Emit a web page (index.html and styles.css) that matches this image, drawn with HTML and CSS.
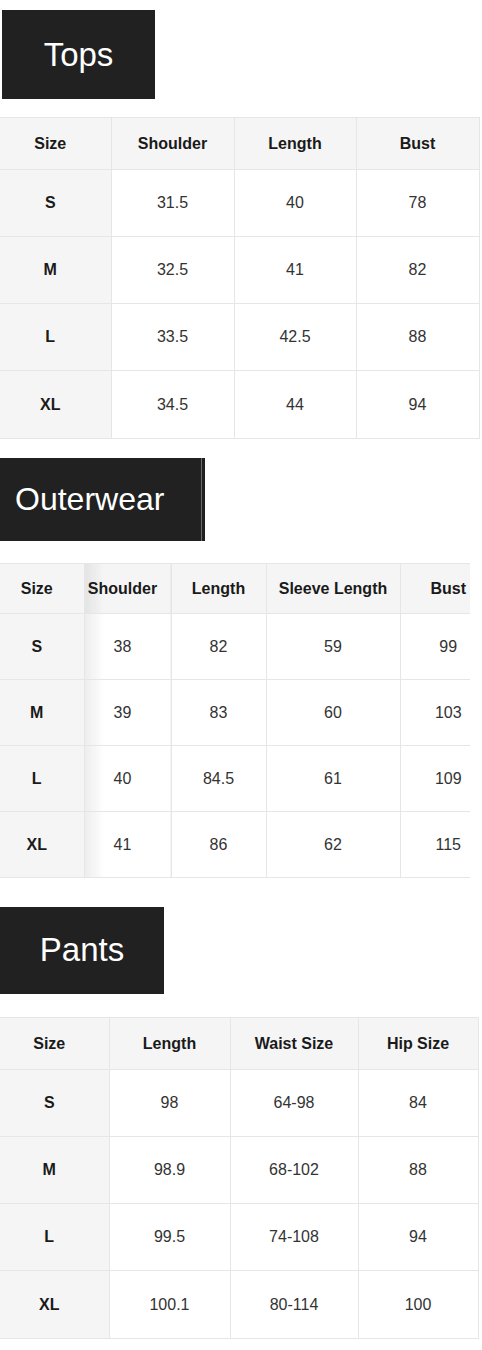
FILE: index.html
```html
<!DOCTYPE html>
<html lang="en">
<head>
<meta charset="utf-8">
<title>Size Chart</title>
<link rel="stylesheet" href="styles.css">
</head>
<body>
<main class="page">
  <section class="chart chart-tops">
    <h2 class="tag tag-tops">Tops</h2>
    <div class="table-wrap">
      <table class="size-table tops">
        <colgroup><col style="width:111px"><col style="width:123px"><col style="width:122px"><col style="width:123px"></colgroup>
        <thead>
          <tr><th>Size</th><th>Shoulder</th><th>Length</th><th>Bust</th></tr>
        </thead>
        <tbody>
          <tr><th>S</th><td>31.5</td><td>40</td><td>78</td></tr>
          <tr><th>M</th><td>32.5</td><td>41</td><td>82</td></tr>
          <tr><th>L</th><td>33.5</td><td>42.5</td><td>88</td></tr>
          <tr><th>XL</th><td>34.5</td><td>44</td><td>94</td></tr>
        </tbody>
      </table>
    </div>
  </section>

  <section class="chart chart-outer">
    <h2 class="tag tag-outer">Outerwear</h2>
    <div class="table-wrap clip">
      <table class="size-table outer">
        <colgroup><col style="width:84px"><col style="width:87px"><col style="width:95px"><col style="width:134px"><col style="width:96px"></colgroup>
        <thead>
          <tr><th>Size</th><th class="shade shift">Shoulder</th><th>Length</th><th>Sleeve Length</th><th class="last">Bust</th></tr>
        </thead>
        <tbody>
          <tr><th>S</th><td class="shade shift">38</td><td>82</td><td>59</td><td class="last">99</td></tr>
          <tr><th>M</th><td class="shade shift">39</td><td>83</td><td>60</td><td class="last">103</td></tr>
          <tr><th>L</th><td class="shade shift">40</td><td>84.5</td><td>61</td><td class="last">109</td></tr>
          <tr><th>XL</th><td class="shade shift">41</td><td>86</td><td>62</td><td class="last">115</td></tr>
        </tbody>
      </table>
    </div>
  </section>

  <section class="chart chart-pants">
    <h2 class="tag tag-pants">Pants</h2>
    <div class="table-wrap">
      <table class="size-table pants">
        <colgroup><col style="width:109px"><col style="width:121px"><col style="width:128px"><col style="width:120px"></colgroup>
        <thead>
          <tr><th>Size</th><th>Length</th><th>Waist Size</th><th>Hip Size</th></tr>
        </thead>
        <tbody>
          <tr><th>S</th><td>98</td><td>64-98</td><td>84</td></tr>
          <tr><th>M</th><td>98.9</td><td>68-102</td><td>88</td></tr>
          <tr><th>L</th><td>99.5</td><td>74-108</td><td>94</td></tr>
          <tr><th>XL</th><td>100.1</td><td>80-114</td><td>100</td></tr>
        </tbody>
      </table>
    </div>
  </section>
</main>
</body>
</html>
```

FILE: styles.css
```css
html, body {
  margin: 0;
  padding: 0;
  background: #ffffff;
}

body {
  font-family: "Liberation Sans", Arial, Helvetica, sans-serif;
  color: #222;
  width: 482px;
}

.page {
  display: flex;
  flex-direction: column;
  align-items: flex-start;
}

.chart {
  display: flex;
  flex-direction: column;
  align-items: flex-start;
}

.tag {
  margin: 0;
  background: #212121;
  color: #fff;
  font-weight: 400;
  font-size: 33px;
  line-height: 1;
  display: flex;
  align-items: center;
  justify-content: center;
  box-sizing: border-box;
}

.tag-tops {
  margin-top: 10px;
  margin-left: 2px;
  width: 153px;
  height: 89px;
}

.tag-outer {
  margin-top: 19px;
  width: 205px;
  height: 83px;
  font-size: 32px;
  justify-content: flex-start;
  padding-left: 15px;
  padding-bottom: 2px;
  box-shadow: inset -3px 0 0 #1f1f1f, inset -4px 0 0 #6a6a6a;
}

.tag-pants {
  margin-top: 29px;
  width: 164px;
  height: 87px;
  padding-bottom: 2px;
}

.table-wrap {
  margin-top: 18px;
}

.chart-outer .table-wrap {
  margin-top: 22px;
}

.chart-pants .table-wrap {
  margin-top: 23px;
}

.table-wrap.clip {
  width: 470px;
  overflow: hidden;
}

.size-table {
  border-collapse: collapse;
  table-layout: fixed;
  font-size: 16px;
}

.size-table.tops { width: 479px; }
.size-table.outer { width: 496px; }
.size-table.pants { width: 478px; }

.size-table th,
.size-table td {
  border: 1px solid #e6e6e6;
  text-align: center;
  vertical-align: middle;
  padding: 0;
}

.size-table tr > :first-child {
  border-left: none;
  padding-right: 10px;
}

.size-table thead th {
  background: #f5f5f5;
  font-weight: 700;
  color: #1a1a1a;
  height: 51px;
}

.size-table tbody th {
  background: #f5f5f5;
  font-weight: 700;
  color: #1a1a1a;
}

.size-table tbody td {
  color: #333;
  background: #fff;
}

.size-table tbody tr th,
.size-table tbody tr td {
  height: 66px;
}

.size-table.tops tbody tr:last-child th,
.size-table.tops tbody tr:last-child td,
.size-table.pants tbody tr:last-child th,
.size-table.pants tbody tr:last-child td {
  height: 67px;
}

.size-table.outer thead th { height: 49px; }
.size-table.outer tbody th,
.size-table.outer tbody td { height: 65px; }

.size-table.pants thead th { height: 51px; }

.size-table.outer .last { border-right: none; }

.size-table .shade {
  background-image: linear-gradient(to right, rgba(0, 0, 0, 0.07), rgba(0, 0, 0, 0) 20px);
  border-left: 1px solid #e0e0e0;
}

.size-table .shift {
  padding-right: 10px;
}
```
